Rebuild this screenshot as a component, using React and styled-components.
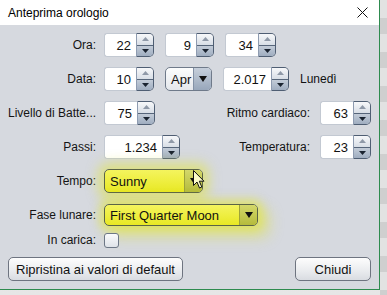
import React from "react";
import styled, { createGlobalStyle } from "styled-components";

const GlobalStyle = createGlobalStyle`
  html, body {
    margin: 0;
    padding: 0;
    background: #ececec;
  }
  body {
    font-family: "Liberation Sans", Arial, sans-serif;
    font-size: 12px;
    color: #111;
  }
`;

const Desktop = styled.div`
  display: flex;
  width: 387px;
  height: 295px;
  overflow: hidden;
  background: linear-gradient(#f4f4f4, #e6e6e6);
`;

const Window = styled.div`
  width: 379px;
  height: 289px;
  flex-shrink: 0;
  display: flex;
  flex-direction: column;
  background: #d6d9df;
  border-right: 1px solid #2e8b4f;
  border-bottom: 1px solid #2e8b4f;
`;

const SideStrip = styled.div`
  flex: 1;
  background: repeating-linear-gradient(
    #e2e2e2 0px,
    #e2e2e2 18px,
    #cfcfcf 18px,
    #cfcfcf 34px
  );
`;

const TitleBar = styled.div`
  height: 25px;
  background: #fff;
  display: flex;
  align-items: center;
  justify-content: space-between;
  padding: 0 11px 0 8px;
  font-size: 12px;
  color: #000;
`;

const CloseIcon = () => (
  <svg width="11" height="11" viewBox="0 0 11 11">
    <path d="M0.5 0.5 L10.5 10.5 M10.5 0.5 L0.5 10.5" stroke="#111" strokeWidth="1" />
  </svg>
);

const Form = styled.div`
  position: relative;
  display: flex;
  flex-direction: column;
  gap: 10px;
  padding: 8px 8px 0 8px;
`;

const Row = styled.div`
  display: flex;
  align-items: center;
  height: ${p => p.$h || 24}px;
  margin-top: ${p => p.$mt || 0}px;
`;

const Label = styled.div`
  width: ${p => p.$w || 88}px;
  text-align: ${p => p.$left ? "left" : "right"};
  margin-right: ${p => p.$gap || 8}px;
  white-space: nowrap;
  color: #141414;
`;

const Controls = styled.div`
  display: flex;
  align-items: center;
  gap: 11px;
`;

const RightPair = styled.div`
  margin-left: auto;
  display: flex;
  align-items: center;
`;

const SpinnerBox = styled.div`
  display: flex;
  width: ${p => p.$w}px;
  height: 24px;
`;

const Field = styled.div`
  flex: 1;
  background: #fff;
  border: 1px solid #c3c9d2;
  border-right: none;
  border-radius: 3px 0 0 3px;
  display: flex;
  align-items: center;
  justify-content: flex-end;
  padding-right: 5px;
  font-size: 13px;
  color: #111;
`;

const SpinButtons = styled.div`
  width: 16px;
  display: flex;
  flex-direction: column;
  border: 1px solid #4f5e73;
  border-left: 1px solid #8e9bb0;
  border-radius: 0 5px 5px 0;
  overflow: hidden;
`;

const SpinHalf = styled.div`
  flex: 1;
  display: flex;
  align-items: center;
  justify-content: center;
  background: ${p => p.$down
    ? "linear-gradient(#c3ccd8, #9fadc0)"
    : "linear-gradient(#f7f8fa, #d8dee6)"};
  border-top: ${p => p.$down ? "1px solid #56657a" : "none"};
`;

const Tri = ({ up, color }) => (
  <svg width="7" height="4" viewBox="0 0 7 4">
    <path d={up ? "M3.5 0 L7 4 L0 4 Z" : "M0 0 L7 0 L3.5 4 Z"} fill={color} />
  </svg>
);

const Spinner = ({ value, width }) => (
  <SpinnerBox $w={width}>
    <Field>{value}</Field>
    <SpinButtons>
      <SpinHalf><Tri up color="#8f99a8" /></SpinHalf>
      <SpinHalf $down><Tri color="#1a2330" /></SpinHalf>
    </SpinButtons>
  </SpinnerBox>
);

const ComboBox = styled.div`
  display: flex;
  width: ${p => p.$w}px;
  height: ${p => p.$h || 24}px;
  border: 1px solid ${p => p.$hot ? "#5b6446" : "#6f7a8a"};
  border-radius: 5px;
  overflow: hidden;
  box-sizing: border-box;
  box-shadow: ${p => p.$glow || "none"};
  background: ${p => p.$hot
    ? "linear-gradient(#f4f45e, #e8e824)"
    : "linear-gradient(#fcfdfd, #e4e7ec)"};
`;

const ComboText = styled.div`
  flex: 1;
  display: flex;
  align-items: center;
  padding-left: 5px;
  font-size: 13px;
  color: #111;
`;

const ComboArrow = styled.div`
  width: 17px;
  display: flex;
  align-items: center;
  justify-content: center;
  border-left: 1px solid ${p => p.$hot ? "#9ea23a" : "#8391a6"};
  background: ${p => p.$hot
    ? "linear-gradient(#d4d86a, #b5bb3c)"
    : "linear-gradient(#c6cfdb, #98a7bb)"};
`;

const Combo = ({ value, width, height, hot, glow }) => (
  <ComboBox $w={width} $h={height} $hot={hot} $glow={glow}>
    <ComboText>{value}</ComboText>
    <ComboArrow $hot={hot}>
      <svg width="8" height="6" viewBox="0 0 8 6">
        <path d="M0 0 L8 0 L4 6 Z" fill="#111" />
      </svg>
    </ComboArrow>
  </ComboBox>
);

const Check = styled.div`
  width: 13px;
  height: 13px;
  border: 1px solid #6d7786;
  border-radius: 3px;
  background: linear-gradient(#fafbfc, #dfe3e9);
`;

const ButtonRow = styled.div`
  display: flex;
  justify-content: space-between;
`;

const Button = styled.div`
  width: ${p => p.$w}px;
  height: 24px;
  box-sizing: border-box;
  display: flex;
  align-items: center;
  justify-content: center;
  border: 1px solid #6e7480;
  border-radius: 5px;
  background: linear-gradient(#fdfdfd, #e9ebee 60%, #d9dce1);
  font-size: 13px;
  color: #111;
`;

const Cursor = styled.svg`
  position: absolute;
  left: 193px;
  top: 145px;
`;

export default function App() {
  return (
    <>
      <GlobalStyle />
      <Desktop>
        <Window>
          <TitleBar>
            <span>Anteprima orologio</span>
            <CloseIcon />
          </TitleBar>
          <Form>
            <Row>
              <Label>Ora:</Label>
              <Controls>
                <Spinner value="22" width={50} />
                <Spinner value="9" width={49} />
                <Spinner value="34" width={51} />
              </Controls>
            </Row>
            <Row>
              <Label>Data:</Label>
              <Controls>
                <Spinner value="10" width={50} />
                <Combo value="Apr" width={47} />
                <Spinner value="2.017" width={66} />
                <span>Lunedì</span>
              </Controls>
            </Row>
            <Row>
              <Label $left>Livello di Batte...</Label>
              <Spinner value="75" width={51} />
              <RightPair>
                <Label $gap={10}>Ritmo cardiaco:</Label>
                <Spinner value="63" width={51} />
              </RightPair>
            </Row>
            <Row>
              <Label>Passi:</Label>
              <Spinner value="1.234" width={76} />
              <RightPair>
                <Label $gap={10}>Temperatura:</Label>
                <Spinner value="23" width={51} />
              </RightPair>
            </Row>
            <Row>
              <Label>Tempo:</Label>
              <Combo
                value="Sunny"
                width={99}
                hot
                glow="0 0 12px 6px rgba(228, 232, 40, 0.5)"
              />
            </Row>
            <Row>
              <Label>Fase lunare:</Label>
              <Combo
                value="First Quarter Moon"
                width={154}
                height={22}
                hot
                glow="0 0 10px 5px rgba(228, 232, 40, 0.5), 8px 8px 14px 4px rgba(228, 232, 40, 0.35)"
              />
            </Row>
            <Row $h={14} $mt={-4}>
              <Label>In carica:</Label>
              <Check />
            </Row>
            <ButtonRow>
              <Button $w={175}>Ripristina ai valori di default</Button>
              <Button $w={76}>Chiudi</Button>
            </ButtonRow>
            <Cursor width="12" height="19" viewBox="0 0 12 19">
              <path
                d="M0.5 0.5 L0.5 15.5 L4 12 L6.5 18 L8.8 17 L6.3 11.2 L11 11.2 Z"
                fill="#fbfbc8"
                stroke="#111"
                strokeWidth="1"
                strokeLinejoin="round"
              />
            </Cursor>
          </Form>
        </Window>
        <SideStrip />
      </Desktop>
    </>
  );
}
